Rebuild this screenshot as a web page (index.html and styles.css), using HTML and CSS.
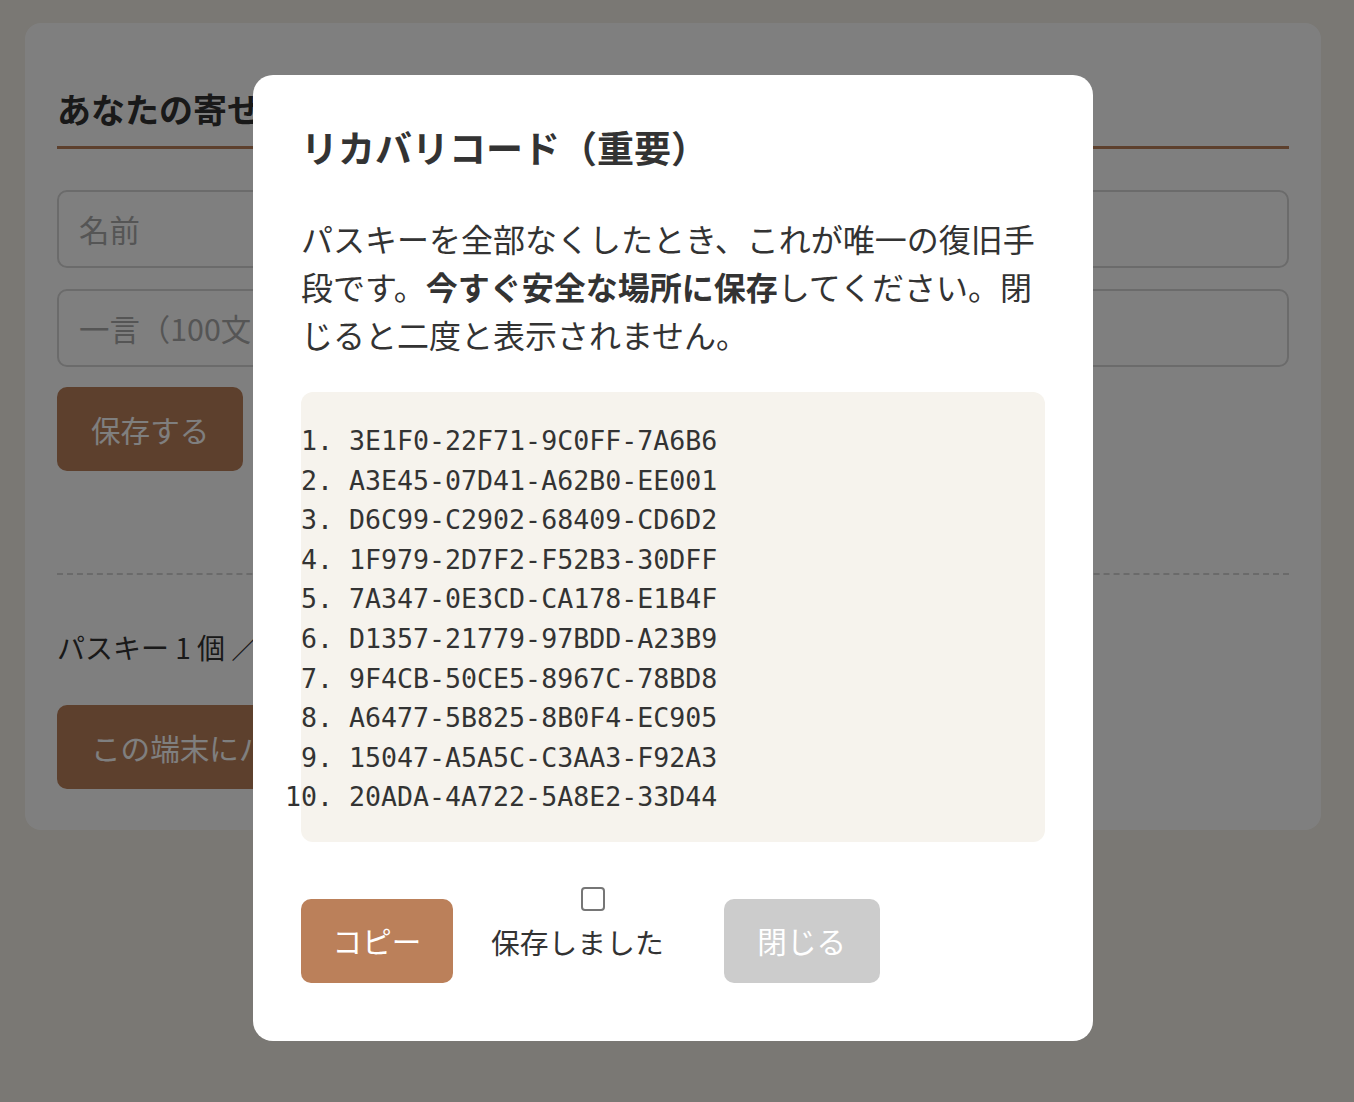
FILE: index.html
```html
<!DOCTYPE html>
<html lang="ja">
<head>
    <meta charset="UTF-8">
    <meta name="viewport" content="width=device-width, initial-scale=1.0">
    <title>寄せ書き</title>
    <link rel="stylesheet" href="styles.css">
</head>
<body>
    <div class="card">
        <h2 class="card-title">あなたの寄せ書き</h2>
        <form class="form">
            <input class="field" type="text" placeholder="名前">
            <input class="field" type="text" placeholder="一言（100文字まで）">
            <div class="form-actions"><button class="btn" type="button">保存する</button></div>
        </form>
        <div class="passkeys">
            <p class="passkey-count">パスキー 1 個 ／ 最大 5 個まで登録できます</p>
            <div class="form-actions"><button class="btn" type="button">この端末にパスキーを登録する（生体認証や画面ロックでログイン）</button></div>
        </div>
    </div>

    <!-- Recovery code dialog -->
    <div class="overlay">
        <div class="modal">
            <h2 class="modal-title">リカバリコード（重要）</h2>
            <p class="modal-text">パスキーを全部なくしたとき、これが唯一の復旧手段です。<strong>今すぐ安全な場所に保存</strong>してください。閉じると二度と表示されません。</p>
            <div class="codes">
                <ol>
                    <li>3E1F0-22F71-9C0FF-7A6B6</li>
                    <li>A3E45-07D41-A62B0-EE001</li>
                    <li>D6C99-C2902-68409-CD6D2</li>
                    <li>1F979-2D7F2-F52B3-30DFF</li>
                    <li>7A347-0E3CD-CA178-E1B4F</li>
                    <li>D1357-21779-97BDD-A23B9</li>
                    <li>9F4CB-50CE5-8967C-78BD8</li>
                    <li>A6477-5B825-8B0F4-EC905</li>
                    <li>15047-A5A5C-C3AA3-F92A3</li>
                    <li>20ADA-4A722-5A8E2-33D44</li>
                </ol>
            </div>
            <div class="actions">
                <button class="btn btn-copy" type="button">コピー</button>
                <label class="saved">
                    <input type="checkbox">
                    <span>保存しました</span>
                </label>
                <button class="btn btn-close" type="button" disabled>閉じる</button>
            </div>
        </div>
    </div>
</body>
</html>
```

FILE: styles.css
```css
* {
    margin: 0;
    padding: 0;
    box-sizing: border-box;
    font-family: "Noto Sans CJK JP", "Noto Sans", sans-serif;
}
body {
    background: #f4f0e8;
    color: #333;
    padding: 23px 33px 0 25px;
    min-height: 100vh;
}
.card {
    background: #fff;
    border-radius: 16px;
    padding: 60px 32px 41px;
}
.card-title {
    font-size: 34px;
    font-weight: 700;
    line-height: 51px;
    color: #333;
    padding-bottom: 12px;
    border-bottom: 3px solid #bb805a;
}
.form {
    display: flex;
    flex-direction: column;
    gap: 21px;
    margin-top: 41px;
}
.field {
    height: 78px;
    border: 2px solid #d6d6d6;
    border-radius: 10px;
    padding: 0 20px;
    font-size: 30.4px;
    color: #333;
    background: #fff;
}
.field::placeholder {
    color: #aaa;
}
.form-actions {
    display: flex;
}
.form .form-actions {
    margin-top: -1px;
}
.btn {
    height: 84px;
    padding: 0 34px;
    border: none;
    border-radius: 10px;
    background: #bb805a;
    color: #fff;
    font-size: 29.6px;
    cursor: pointer;
}
.passkeys {
    margin-top: 102px;
    border-top: 2px dashed #d4d4d4;
    padding-top: 51px;
}
.passkey-count {
    font-size: 28px;
    line-height: 42px;
    margin-bottom: 37px;
}

/* dialog */
.overlay {
    position: fixed;
    inset: 0;
    background: rgba(0, 0, 0, 0.5);
    display: flex;
    align-items: center;
    justify-content: center;
    padding: 14px 8px 0 0;
}
.modal {
    width: 840px;
    background: #fff;
    border-radius: 20px;
    padding: 48px;
}
.modal-title {
    font-size: 37px;
    font-weight: 700;
    line-height: 48px;
    color: #333;
    margin-bottom: 43px;
}
.modal-text {
    font-size: 32px;
    line-height: 48px;
    color: #333;
}
.modal-text strong {
    font-weight: 700;
}
.codes {
    margin-top: 34px;
    background: #f6f3ed;
    border-radius: 12px;
    padding: 29px 0 25px;
}
.codes ol {
    padding-left: 48px;
    font-family: "DejaVu Sans Mono", monospace;
    font-size: 26.6px;
    line-height: 39.6px;
    color: #333;
}
.codes li {
    font-family: "DejaVu Sans Mono", monospace;
}
.actions {
    display: flex;
    align-items: flex-end;
    gap: 38px;
    margin-top: 45px;
    margin-bottom: 10px;
}
.btn-copy {
    padding: 0 31.6px;
}
.saved {
    display: flex;
    flex-direction: column;
    align-items: flex-start;
    margin: 0 22px 20px 0;
    font-size: 28.8px;
    line-height: 43px;
    color: #333;
}
.saved input {
    appearance: none;
    width: 24px;
    height: 24px;
    margin: 0 0 9px 90px;
    border: 2px solid #767676;
    border-radius: 4px;
    background: #fff;
}
.btn-close {
    padding: 0 33.6px;
    background: #cccccc;
    cursor: default;
}
```
